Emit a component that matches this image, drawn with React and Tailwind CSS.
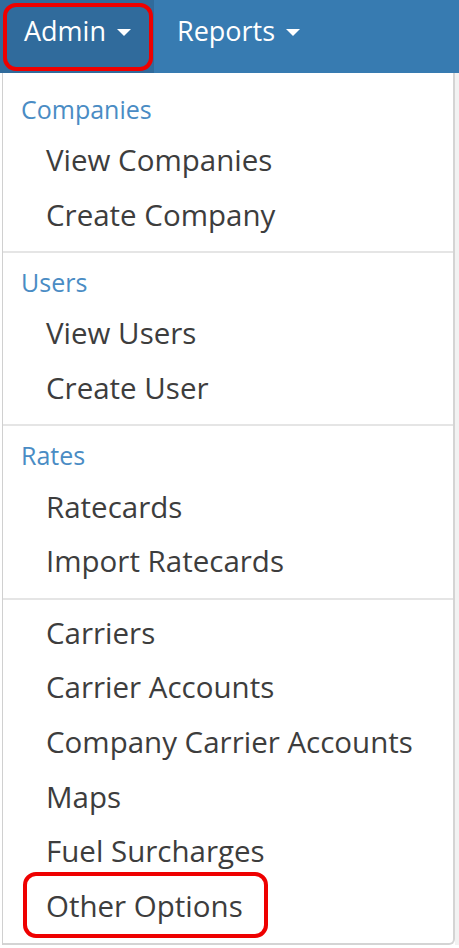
import React from "react";

const font = { fontFamily: '"Open Sans", "Noto Sans", sans-serif' };

function Caret() {
  return (
    <svg width="14" height="8" viewBox="0 0 14 8" className="ml-[11px] mt-[2px]">
      <polygon points="0,0 14,0 7,7" fill="white" />
    </svg>
  );
}

function Header({ children }) {
  return (
    <div className="h-[47px] flex items-center pl-[18px] text-[25px] text-[#4a8cc4]">
      {children}
    </div>
  );
}

function Item({ children }) {
  return (
    <div className="h-[54.6px] flex items-center pl-[43px] text-[29.5px] text-[#3d3d3d]">
      {children}
    </div>
  );
}

function Divider() {
  return <div className="h-[2px] bg-[#e5e5e5] mt-[9px] mb-[6px]" />;
}

export default function App() {
  return (
    <div
      className="relative w-[459px] h-[948px] overflow-hidden bg-white"
      style={font}
    >
      <div className="h-[73px] bg-[#377bb1] flex items-stretch text-white text-[27px]">
        <div className="w-[154px] bg-[#306b9c] flex items-center pl-[24px] pb-[10px]">
          <span>Admin</span>
          <Caret />
        </div>
        <div className="flex items-center pl-[23px] pb-[10px]">
          <span>Reports</span>
          <Caret />
        </div>
      </div>
      <div className="flex">
        <div className="w-[3px] border-r border-[#d0d0d0]" />
        <div className="w-[452px] h-[872px] bg-white border-r-2 border-b-2 border-[#d4d4d4] rounded-br-[6px] pt-[13px] pb-[10px]">
          <Header>Companies</Header>
          <Item>View Companies</Item>
          <Item>Create Company</Item>
          <Divider />
          <Header>Users</Header>
          <Item>View Users</Item>
          <Item>Create User</Item>
          <Divider />
          <Header>Rates</Header>
          <Item>Ratecards</Item>
          <Item>Import Ratecards</Item>
          <Divider />
          <Item>Carriers</Item>
          <Item>Carrier Accounts</Item>
          <Item>Company Carrier Accounts</Item>
          <Item>Maps</Item>
          <Item>Fuel Surcharges</Item>
          <Item>Other Options</Item>
        </div>
        <div className="flex-1 bg-[#f2f2f2]" />
      </div>
      <div className="absolute left-[3px] top-[3px] w-[150px] h-[68px] border-[4px] border-[#ee0000] rounded-[13px]" />
      <div className="absolute left-[23px] top-[872px] w-[245px] h-[66px] border-[4px] border-[#ee0000] rounded-[13px]" />
    </div>
  );
}
